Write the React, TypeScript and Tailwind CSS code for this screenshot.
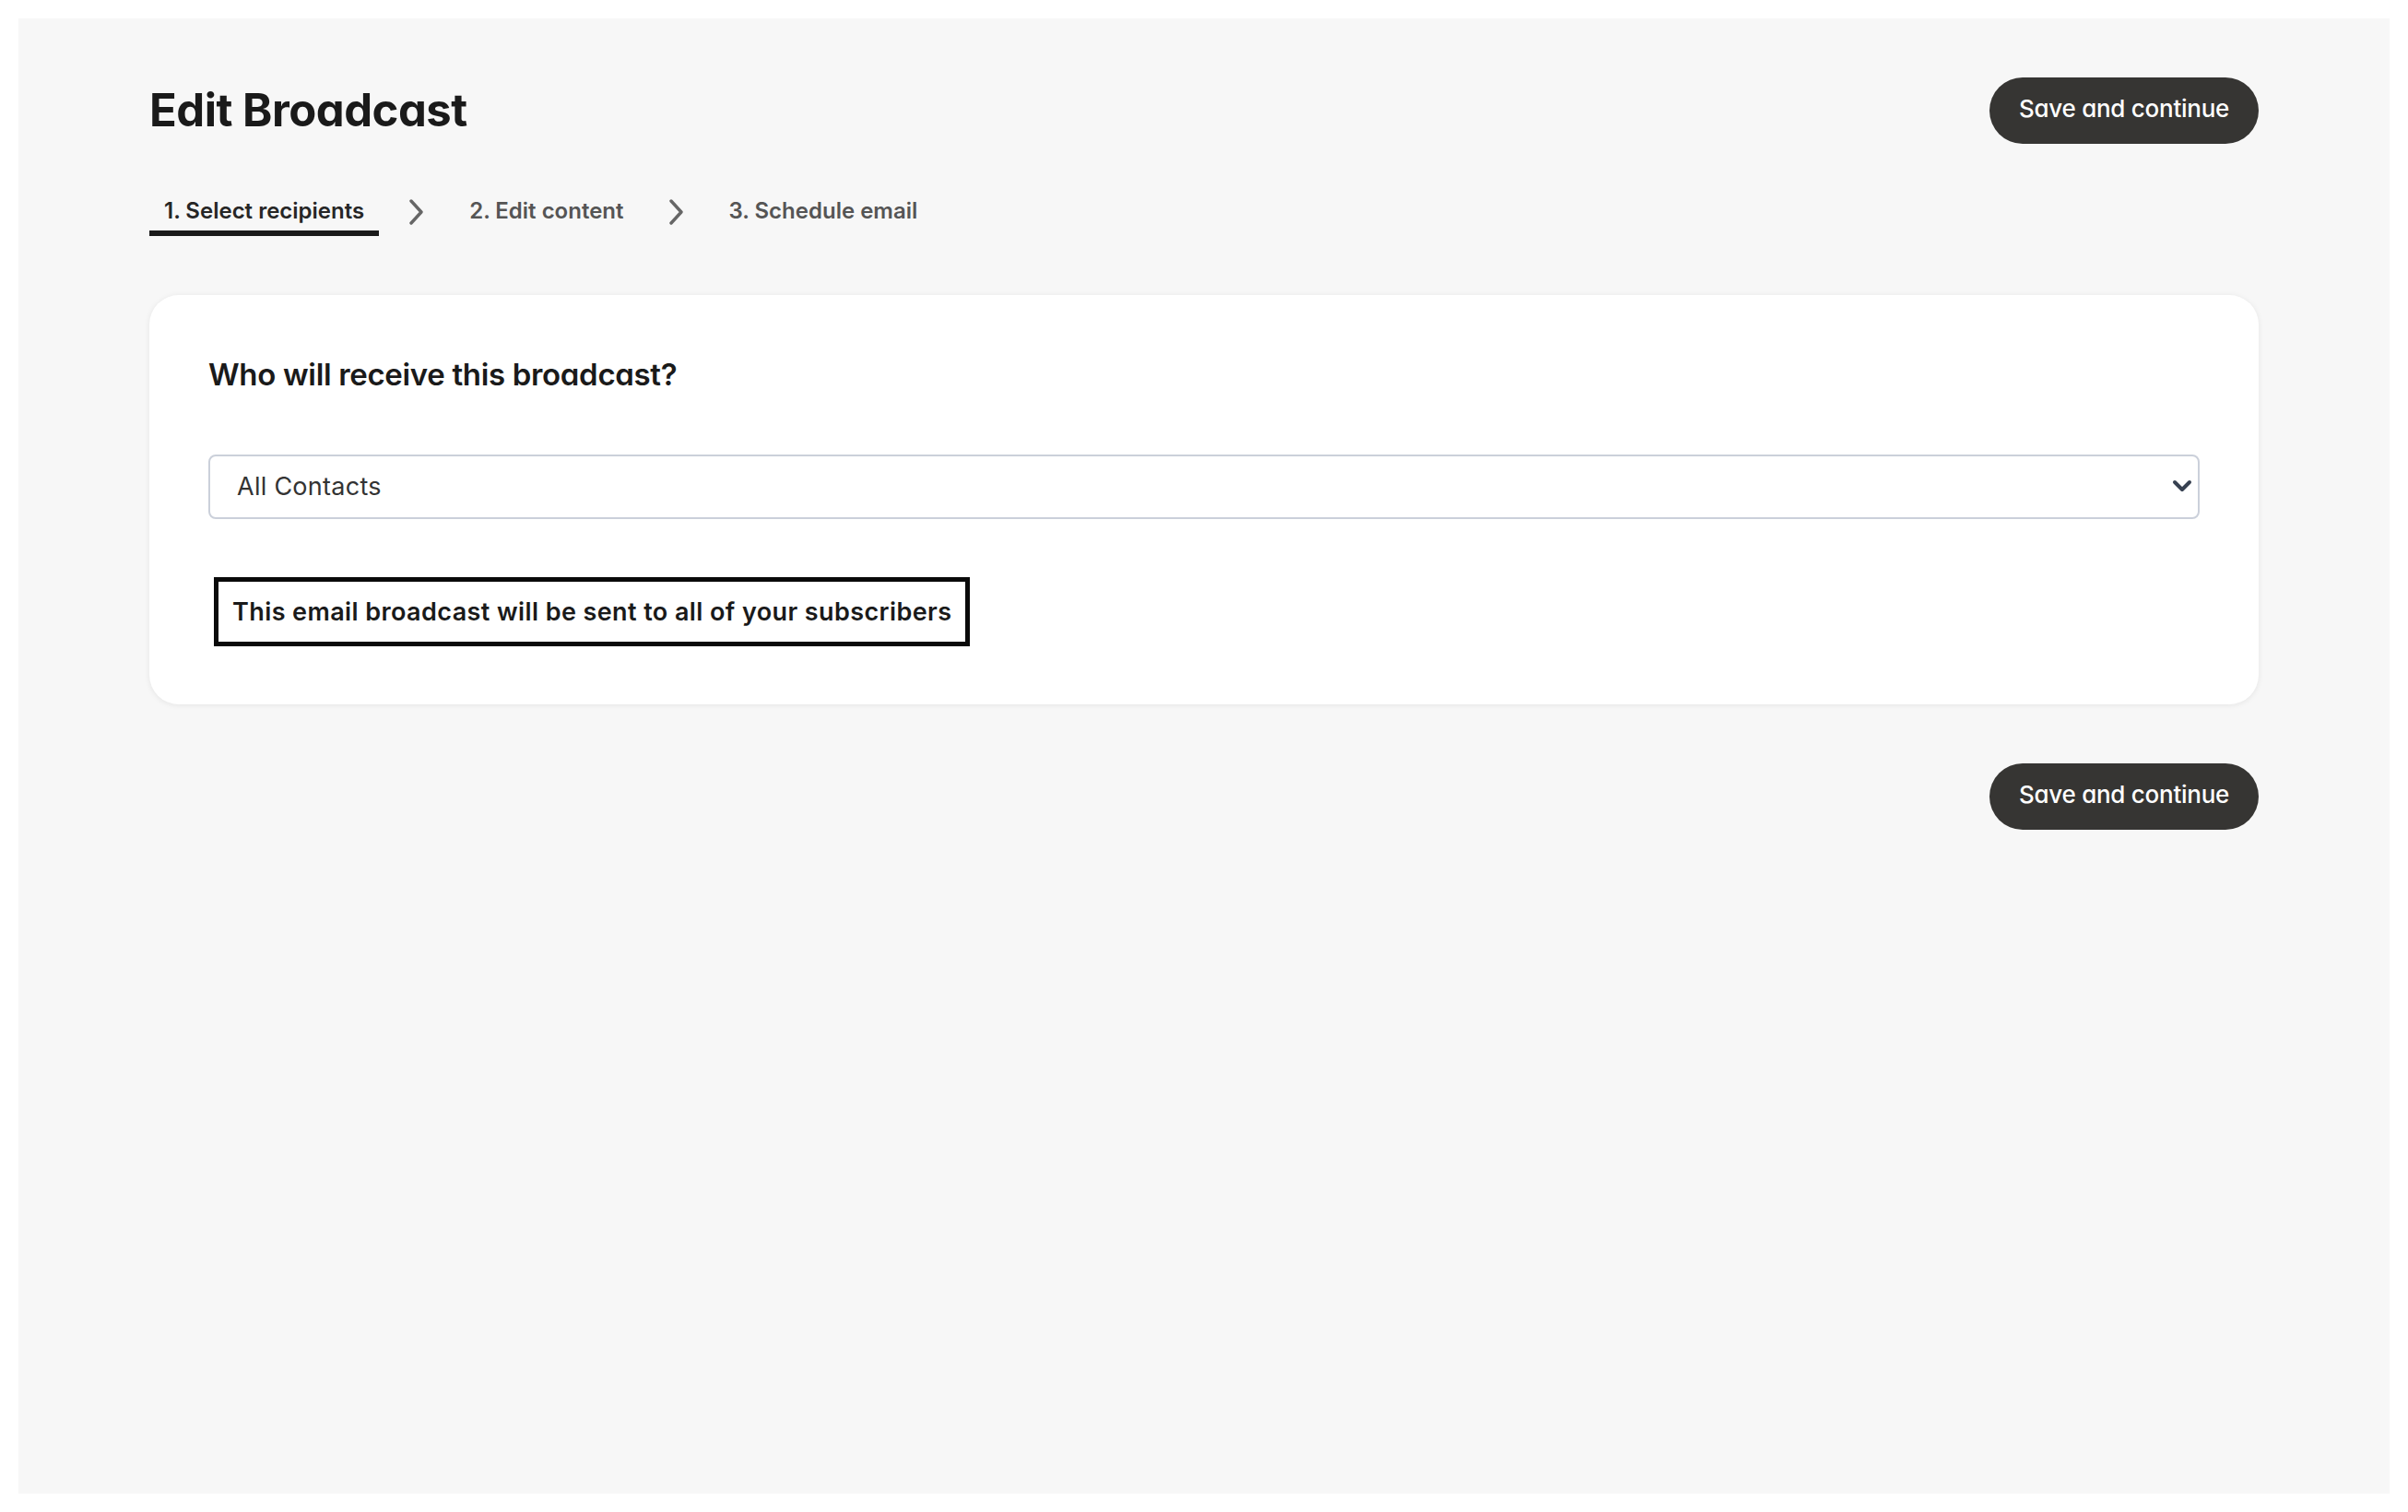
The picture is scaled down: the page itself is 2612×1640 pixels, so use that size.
import React from "react";

function Chevron() {
  return (
    <svg width="18" height="28" viewBox="0 0 18 28" fill="none" className="shrink-0 mb-[9px]">
      <path d="M3 2 L14 14 L3 26" stroke="#666666" strokeWidth="3.4" strokeLinecap="round" strokeLinejoin="round" />
    </svg>
  );
}

function SaveButton() {
  return (
    <button className="h-[72px] w-[292px] rounded-full bg-[#363533] text-white text-[26px] font-medium tracking-[-0.01em] [font-family:Inter,sans-serif] [font-feature-settings:'cv11'] flex items-center justify-center pb-[5px]">
      Save and continue
    </button>
  );
}

export default function App() {
  return (
    <div className="bg-white p-[20px] min-h-[1640px] [font-family:Inter,sans-serif]">
      <div className="bg-[#f7f7f7] h-[1600px] px-[142px] pt-[64px]">
        <div className="flex items-center justify-between">
          <h1 className="text-[49px] leading-[56px] font-bold text-[#1a1a1a] tracking-[-0.01em] [font-feature-settings:'cv11']">
            Edit Broadcast
          </h1>
          <SaveButton />
        </div>

        <div className="mt-[57px] flex items-center gap-8">
          <div className="px-4 pb-[5px] border-b-[6px] border-[#1a1a1a] text-[24px] leading-[32px] font-semibold text-[#262626]">
            1. Select recipients
          </div>
          <Chevron />
          <div className="px-4 pb-[11px] text-[24px] leading-[32px] font-semibold text-[#555555]">
            2. Edit content
          </div>
          <Chevron />
          <div className="px-4 pb-[11px] text-[24px] leading-[32px] font-semibold text-[#555555]">
            3. Schedule email
          </div>
        </div>

        <div className="mt-[64px] bg-white rounded-[32px] shadow-[0_1px_6px_rgba(0,0,0,0.08)] px-[64px] pt-[66px] pb-[63px]">
          <h2 className="text-[33px] leading-[40px] font-semibold text-[#1a1a1a] tracking-[-0.01em] [font-feature-settings:'cv11']">
            Who will receive this broadcast?
          </h2>

          <div className="relative mt-[67px]">
            <select className="appearance-none w-full h-[70px] rounded-[8px] border-2 border-[#cbd0da] bg-white pl-[29px] text-[27px] tracking-[0.01em] text-[#333333] outline-none">
              <option>All Contacts</option>
            </select>
            <svg
              className="pointer-events-none absolute right-[8px] top-[27px]"
              width="22"
              height="16"
              viewBox="0 0 22 16"
              fill="none"
            >
              <path d="M3 3 L11 11 L19 3" stroke="#374151" strokeWidth="4" strokeLinecap="round" strokeLinejoin="round" />
            </svg>
          </div>

          <div className="mt-[63px] ml-[6px] inline-block border-[5px] border-[#0a0a0a] px-[15px] py-[16px] text-[27px] leading-[33px] font-semibold tracking-[0.015em] text-[#1a1a1a]">
            This email broadcast will be sent to all of your subscribers
          </div>
        </div>

        <div className="mt-[64px] flex justify-end">
          <SaveButton />
        </div>
      </div>
    </div>
  );
}
